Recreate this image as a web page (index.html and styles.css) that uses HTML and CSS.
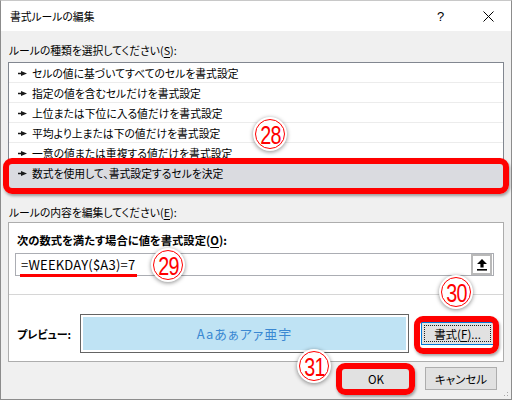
FILE: index.html
```html
<!DOCTYPE html>
<html lang="ja">
<head>
<meta charset="utf-8">
<link rel="stylesheet" href="styles.css">
</head>
<body>
<div class="dialog">
  <div class="titlebar">
    <span class="title">書式ルールの編集</span>
    <span class="tb-help">?</span>
    <span class="tb-close"><svg width="11" height="11" viewBox="0 0 11 11"><path d="M0.5 0.5 L10.5 10.5 M10.5 0.5 L0.5 10.5" stroke="#000" stroke-width="1"/></svg></span>
  </div>
  <div class="content">
    <div class="label l1">ルールの種類を選択してください(<u>S</u>):</div>
    <div class="list">
      <div class="item"><svg class="bullet" width="9" height="5" viewBox="0 0 9 5"><path d="M0 1.8 H3 V0 L9 2.5 L3 5 V3.2 H0 Z" fill="#1a1a1a"/></svg>セルの値に基づいてすべてのセルを書式設定</div>
      <div class="item"><svg class="bullet" width="9" height="5" viewBox="0 0 9 5"><path d="M0 1.8 H3 V0 L9 2.5 L3 5 V3.2 H0 Z" fill="#1a1a1a"/></svg>指定の値を含むセルだけを書式設定</div>
      <div class="item"><svg class="bullet" width="9" height="5" viewBox="0 0 9 5"><path d="M0 1.8 H3 V0 L9 2.5 L3 5 V3.2 H0 Z" fill="#1a1a1a"/></svg>上位または下位に入る値だけを書式設定</div>
      <div class="item"><svg class="bullet" width="9" height="5" viewBox="0 0 9 5"><path d="M0 1.8 H3 V0 L9 2.5 L3 5 V3.2 H0 Z" fill="#1a1a1a"/></svg>平均より上または下の値だけを書式設定</div>
      <div class="item"><svg class="bullet" width="9" height="5" viewBox="0 0 9 5"><path d="M0 1.8 H3 V0 L9 2.5 L3 5 V3.2 H0 Z" fill="#1a1a1a"/></svg>一意の値または重複する値だけを書式設定</div>
      <div class="item selected"><svg class="bullet" width="9" height="5" viewBox="0 0 9 5"><path d="M0 1.8 H3 V0 L9 2.5 L3 5 V3.2 H0 Z" fill="#1a1a1a"/></svg>数式を使用して、書式設定するセルを決定</div>
    </div>
    <div class="label l2">ルールの内容を編集してください(<u>E</u>):</div>
    <div class="group">
      <div class="bold-label">次の数式を満たす場合に値を書式設定(<u>O</u>):</div>
      <div class="formula">
        <span class="formula-text">=WEEKDAY($A3)=7</span>
        <span class="collapse-btn"><svg width="12" height="13" viewBox="0 0 12 13"><path d="M6 1 L11 6 L7.6 6 L7.6 9.5 L4.4 9.5 L4.4 6 L1 6 Z" fill="#000"/><rect x="1" y="11" width="10" height="1.6" fill="#000"/></svg></span>
      </div>
      <div class="sep"></div>
      <div class="preview-row">
        <span class="preview-label">プレビュー:</span>
        <div class="preview-box"><div class="preview-inner">Aaあぁアァ亜宇</div></div>
        <span class="btn fmt-btn"><span class="focus">書式(<u>F</u>)...</span></span>
      </div>
    </div>
    <div class="buttons">
      <span class="btn ok-btn">OK</span>
      <span class="btn cancel-btn">キャンセル</span>
    </div>
  </div>
  <div class="grip"></div>

  <div class="hl hl-row"></div>
  <div class="hl hl-fmt"></div>
  <div class="hl hl-ok"></div>
  <div class="underline"></div>

  <div class="badge b28"><span class="ring"><span class="num">28</span></span></div>
  <div class="badge b29"><span class="ring"><span class="num">29</span></span></div>
  <div class="badge b30"><span class="ring"><span class="num">30</span></span></div>
  <div class="badge b31"><span class="ring"><span class="num">31</span></span></div>
</div>
</body>
</html>
```

FILE: styles.css
```css
html, body {
  margin: 0;
  padding: 0;
}
body {
  width: 512px;
  height: 400px;
  overflow: hidden;
  background: #fff;
  font-family: "Noto Sans CJK JP", "Noto Sans", sans-serif;
  font-size: 10.8px;
  color: #000;
  font-feature-settings: "palt";
}
u { text-decoration: underline; text-underline-offset: 2px; }
.dialog {
  position: relative;
  width: 512px;
  height: 400px;
  box-sizing: border-box;
  border: 1px solid #8c8c8c;
  border-top-color: #c8c8c8;
  background: #f0f0f0;
  display: flex;
  flex-direction: column;
}
.titlebar {
  height: 30px;
  background: #fff;
  display: flex;
  align-items: center;
  flex-shrink: 0;
}
.title {
  margin-left: 9px;
  font-size: 10.8px;
  flex: 1;
}
.tb-help {
  width: 10px;
  font-family: "Liberation Sans", sans-serif;
  font-size: 13px;
  margin-right: 36px;
}
.tb-close {
  width: 11px;
  height: 11px;
  margin-right: 17px;
  display: flex;
}
.content {
  padding: 0 7px;
  display: flex;
  flex-direction: column;
}
.label {
  line-height: 18px;
  padding-left: 1px;
}
.l1 { margin-top: 10px; margin-bottom: 3px; }
.list {
  background: #fff;
  border: 1px solid #828790;
  height: 125px;
  overflow: hidden;
  display: flex;
  flex-direction: column;
}
.item {
  height: 17px;
  line-height: 17px;
  padding-top: 2px;
  border-bottom: 1px solid #ececec;
  display: flex;
  align-items: center;
  flex-shrink: 0;
}
.bullet {
  margin-left: 9px;
  margin-right: 5px;
}
.item.selected {
  background: #dadbe0;
  height: 23px;
  align-items: flex-start;
  border-bottom: none;
}
.item.selected .bullet { margin-top: 6px; }
.l2 { margin-top: 14px; margin-bottom: 1px; }
.group {
  background: #fff;
  border: 1px solid #adadad;
  height: 138px;
  display: flex;
  flex-direction: column;
}
.bold-label {
  font-weight: bold;
  font-size: 11.3px;
  line-height: 18px;
  margin: 8px 0 4px 8px;
}
.formula {
  height: 21px;
  border: 1px solid #abadb3;
  margin: 0 9px 0 6px;
  display: flex;
  align-items: center;
}
.formula-text {
  flex: 1;
  margin-left: 5px;
  font-size: 13px;
  letter-spacing: 0.2px;
}
.collapse-btn {
  width: 17px;
  height: 17px;
  border: 2px solid #b9b9b9;
  margin-right: 1px;
  display: flex;
  align-items: center;
  justify-content: center;
}
.sep {
  height: 1px;
  background: #d6d6d6;
  margin-top: 18px;
}
.preview-row {
  display: flex;
  align-items: center;
  margin-top: 19px;
}
.preview-label {
  margin-left: 8px;
  width: 63px;
  font-weight: bold;
  font-size: 11px;
}
.preview-box {
  width: 327px;
  height: 37px;
  border: 1px solid #646464;
  padding: 0;
  display: flex;
}
.preview-inner {
  flex: 1;
  margin: 2px;
  background: #bfe3f4;
  color: #3a88d2;
  font-size: 13px;
  letter-spacing: 1px;
  display: flex;
  align-items: center;
  justify-content: center;
}
.btn {
  box-sizing: border-box;
  height: 23px;
  border: 1px solid #adadad;
  background: #e1e1e1;
  display: flex;
  align-items: center;
  justify-content: center;
  font-size: 11.5px;
}
.fmt-btn {
  width: 73px;
  margin-left: 12px;
  border-color: #0078d7;
  padding: 2px;
}
.fmt-btn .focus {
  flex: 1;
  align-self: stretch;
  border: 1px dotted #222;
  display: flex;
  align-items: center;
  justify-content: center;
}
.buttons {
  display: flex;
  justify-content: flex-end;
  margin-top: 5px;
  padding-right: 7px;
  gap: 14px;
}
.ok-btn { width: 70px; }
.cancel-btn { width: 72px; }
.grip {
  position: absolute;
  right: 1px;
  bottom: 1px;
  width: 10px;
  height: 10px;
  background: radial-gradient(circle, #a8a8a8 0.8px, transparent 1px) 0 0 / 3px 3px;
  clip-path: polygon(100% 0, 100% 100%, 0 100%);
}
.hl {
  position: absolute;
  border: 6px solid #ff0000;
  border-radius: 9px;
  box-shadow: 1px 2px 3px rgba(0,0,0,0.35);
  box-sizing: border-box;
}
.hl-row { left: 2px; top: 157px; width: 506px; height: 36px; }
.hl-fmt { left: 413px; top: 315px; width: 85px; height: 38px; }
.hl-ok { left: 335px; top: 362px; width: 79px; height: 32px; }
.underline {
  position: absolute;
  left: 19px;
  top: 273px;
  width: 117px;
  height: 3px;
  background: #ff0000;
}
.badge {
  position: absolute;
  width: 34px;
  height: 34px;
  border-radius: 50%;
  background: #fff;
  box-shadow: 0 1px 4px rgba(0,0,0,0.45);
  display: flex;
  align-items: center;
  justify-content: center;
}
.ring {
  width: 30px;
  height: 30px;
  box-sizing: border-box;
  border-radius: 50%;
  border: 1.8px solid #ff0000;
  display: flex;
  align-items: center;
  justify-content: center;
}
.num {
  color: #ff0000;
  font-family: "Liberation Sans", sans-serif;
  font-size: 26px;
  line-height: 26px;
  letter-spacing: -1px;
  transform: scaleX(0.76);
  margin-top: 1px;
}
.b28 { left: 252px; top: 116px; }
.b29 { left: 150px; top: 247px; }
.b30 { left: 438px; top: 274px; }
.b31 { left: 296px; top: 348px; }
```
